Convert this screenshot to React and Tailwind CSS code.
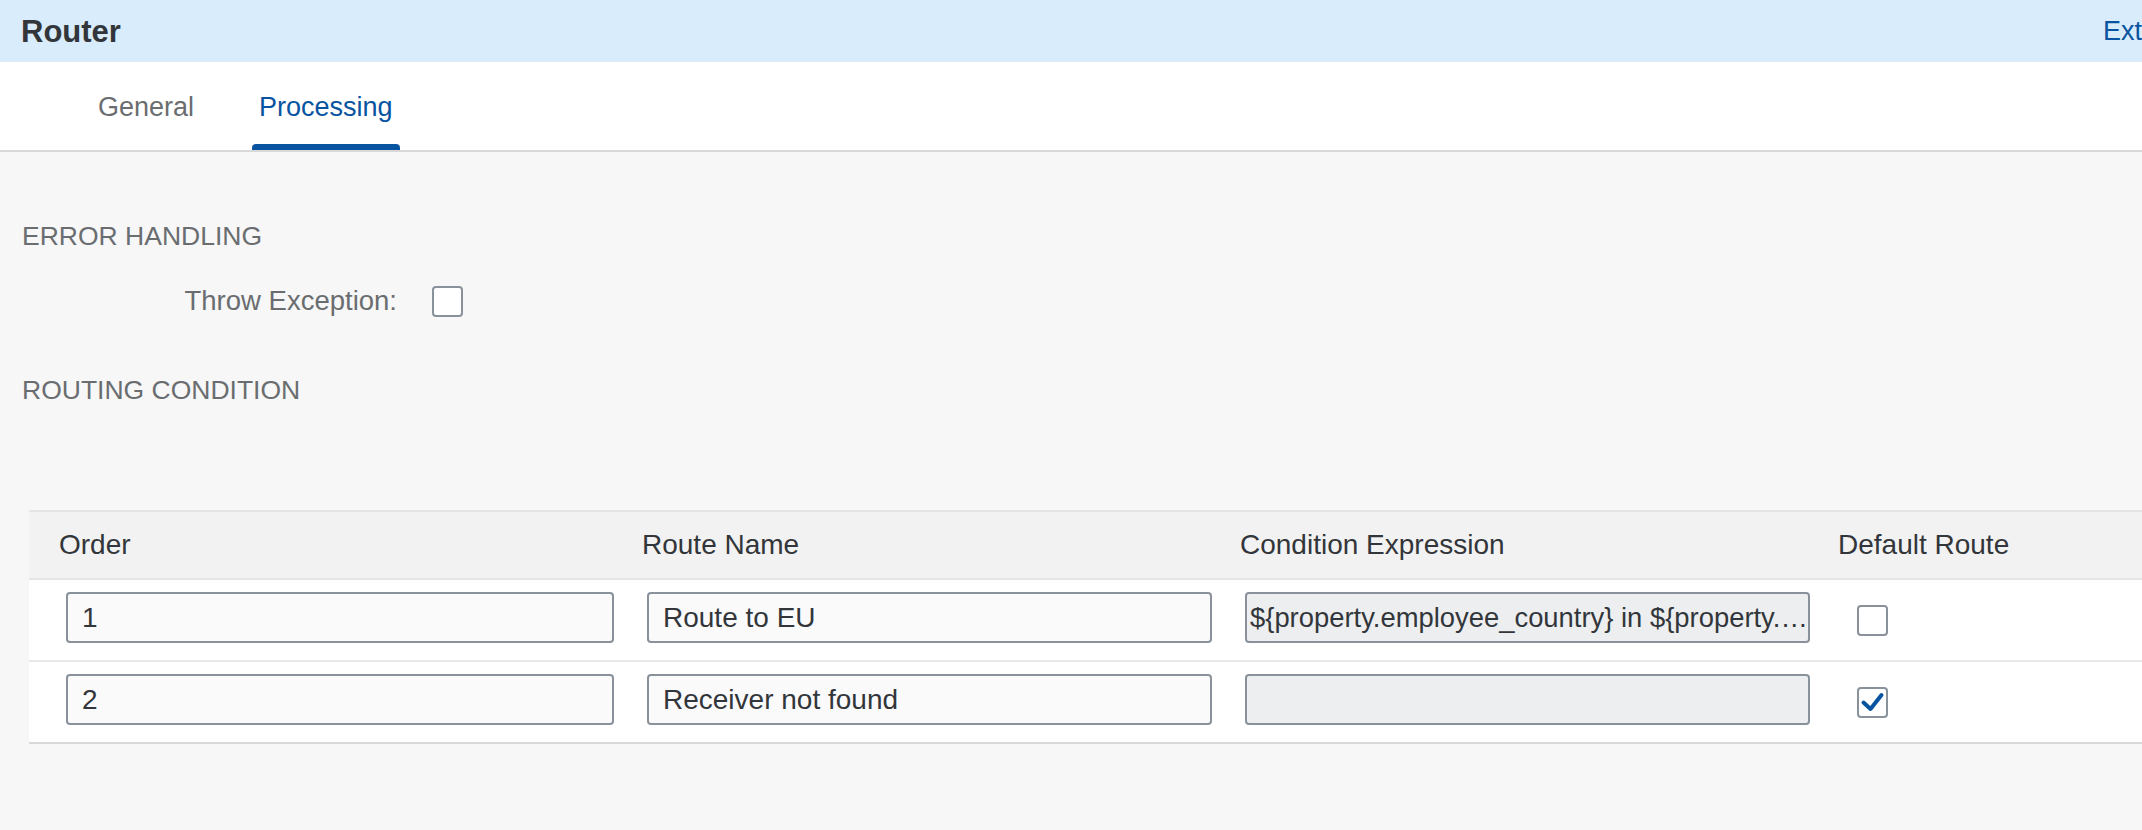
import React from 'react';

const rows = [
  {
    order: '1',
    name: 'Route to EU',
    condition: '${property.employee_country} in ${property.eu_country_list}',
    isDefault: false,
  },
  { order: '2', name: 'Receiver not found', condition: '', isDefault: true },
];

function Checkbox({ checked }) {
  return (
    <div className="w-[31px] h-[31px] border-2 border-[#89919a] rounded-[4px] bg-white flex items-center justify-center">
      {checked && (
        <svg width="27" height="27" viewBox="0 0 27 27" fill="none">
          <path
            d="M4.5 13.5 L11.5 20 L22.5 6"
            stroke="#0854a0"
            strokeWidth="4"
            strokeLinecap="round"
            strokeLinejoin="round"
          />
        </svg>
      )}
    </div>
  );
}

function Field({ value, muted }) {
  return (
    <div
      className={`h-[51px] border-2 border-[#89919a] rounded-[4px] leading-[47px] text-[#32363a] truncate ${
        muted ? 'bg-[#edeef0] pl-[3px] pr-0 text-[27.4px]' : 'bg-[#fafafa] pl-[14px] pr-[14px] text-[28px]'
      }`}
    >
      {value}
    </div>
  );
}

export default function App() {
  return (
    <div
      className="w-[2142px] h-[830px] overflow-hidden bg-[#f7f7f7] text-[#32363a]"
      style={{ fontFamily: '"Liberation Sans", Arial, sans-serif' }}
    >
      {/* Title bar */}
      <header className="h-[62px] bg-[#d9ecfb] flex items-center pl-[21px] overflow-hidden">
        <h1 className="text-[31px] leading-[36px] font-bold text-[#32363a] pt-[2px]">Router</h1>
        <div className="ml-auto w-[39px] overflow-hidden shrink-0">
          <span className="block whitespace-nowrap text-[27px] leading-[32px] text-[#0854a0]">Externalize</span>
        </div>
      </header>

      {/* Tabs */}
      <nav className="h-[90px] bg-white border-b-2 border-[#d9d9d9] flex pl-[91px] gap-[51px]">
        <div className="flex flex-col px-[7px] pt-[29px]">
          <span className="text-[27px] leading-[32px] text-[#6a6d70]">General</span>
        </div>
        <div className="flex flex-col pt-[29px]">
          <span className="text-[27px] leading-[32px] text-[#0854a0] px-[7px]">Processing</span>
          <div className="mt-auto h-[6px] bg-[#0854a0] rounded-t-[4px]"></div>
        </div>
      </nav>

      {/* Content */}
      <main className="pt-[69px]">
        <div className="pl-[22px]">
          <h2 className="text-[26.5px] leading-[30px] text-[#6a6d70]">ERROR HANDLING</h2>
          <div className="flex items-center h-[32px] mt-[34px]">
            <label className="w-[375px] text-right text-[27.5px] leading-[32px] text-[#6a6d70]">
              Throw Exception:
            </label>
            <div className="ml-[35px]">
              <Checkbox checked={false} />
            </div>
          </div>
          <h2 className="text-[26.5px] leading-[30px] text-[#6a6d70] mt-[58px]">ROUTING CONDITION</h2>
        </div>

        {/* Routes table */}
        <div className="ml-[29px] mt-[105px]">
          <div className="grid grid-cols-[601px_598px_598px_1fr] h-[70px] bg-[#f2f2f2] border-t-2 border-b-2 border-[#e5e5e5] text-[28px] leading-[32px] text-[#32363a]">
            <div className="flex items-center pl-[30px]">Order</div>
            <div className="flex items-center pl-[12px]">Route Name</div>
            <div className="flex items-center pl-[12px]">Condition Expression</div>
            <div className="flex items-center pl-[12px]">Default Route</div>
          </div>
          {rows.map((r, i) => (
            <div
              key={r.order}
              className={`grid grid-cols-[601px_598px_598px_1fr] h-[82px] bg-white border-b-2 ${
                i === rows.length - 1 ? 'border-[#d9d9d9]' : 'border-[#e8e8e8]'
              }`}
            >
              <div className="pt-[12px] pl-[37px] pr-[16px]">
                <Field value={r.order} />
              </div>
              <div className="pt-[12px] pl-[17px] pr-[16px]">
                <Field value={r.name} />
              </div>
              <div className="pt-[12px] pl-[17px] pr-[16px] min-w-0">
                <Field value={r.condition} muted />
              </div>
              <div className="flex items-center pl-[31px]">
                <Checkbox checked={r.isDefault} />
              </div>
            </div>
          ))}
        </div>
      </main>
    </div>
  );
}
